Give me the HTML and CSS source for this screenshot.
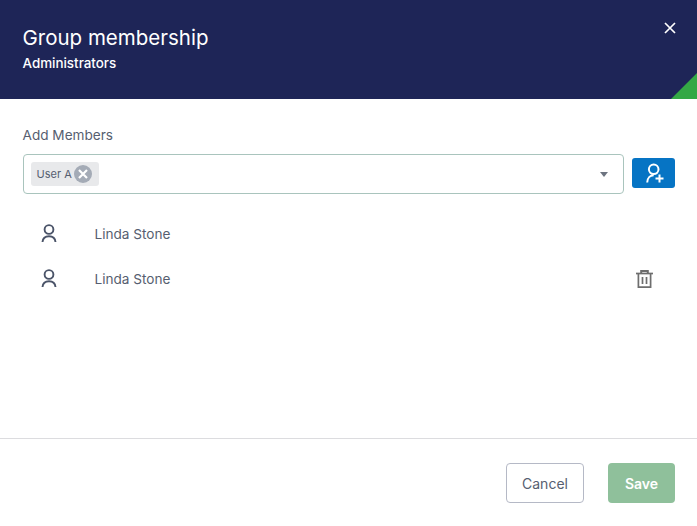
FILE: index.html
```html
<!DOCTYPE html>
<html lang="en">
<head>
    <meta charset="UTF-8">
    <meta name="viewport" content="width=device-width, initial-scale=1.0">
    <title>Group membership</title>
    <link rel="stylesheet" href="styles.css">
</head>
<body>
    <!-- Header -->
    <header class="modal-header">
        <h1>Group membership</h1>
        <p>Administrators</p>
        <svg class="close-icon" width="12" height="12" viewBox="0 0 12 12">
            <path d="M1 1L11 11M11 1L1 11" stroke="#fff" stroke-width="1.7" fill="none"/>
        </svg>
        <span class="corner"></span>
    </header>

    <!-- Add members -->
    <main class="modal-body">
        <label class="field-label">Add Members</label>
        <div class="add-row">
            <div class="select-box">
                <span class="tag">
                    User A
                    <span class="tag-remove">
                        <svg width="18" height="18" viewBox="0 0 18 18">
                            <path d="M5 5L13 13M13 5L5 13" stroke="#fff" stroke-width="2.2" fill="none"/>
                        </svg>
                    </span>
                </span>
                <span class="caret"></span>
            </div>
            <button class="add-btn">
                <svg width="20" height="20" viewBox="0 0 20 20" fill="none" stroke="#fff" stroke-width="2">
                    <circle cx="9.7" cy="6.3" r="4.8"/>
                    <path d="M3.2 19.5C3.4 15 6.2 12.3 9.7 12.3"/>
                    <path d="M11.5 15.5H19.5M15.5 11.5V19.5"/>
                </svg>
            </button>
        </div>

        <ul class="member-list">
            <li>
                <svg class="user-icon" width="16" height="20" viewBox="0 0 16 20" fill="none" stroke="#4a5368" stroke-width="1.9">
                    <circle cx="8" cy="5.5" r="4.4"/>
                    <path d="M1.5 18C1.8 14.5 4.2 12.2 8 12.2C11.8 12.2 14.2 14.5 14.5 18"/>
                </svg>
                <span class="member-name">Linda Stone</span>
            </li>
            <li>
                <svg class="user-icon" width="16" height="20" viewBox="0 0 16 20" fill="none" stroke="#4a5368" stroke-width="1.9">
                    <circle cx="8" cy="5.5" r="4.4"/>
                    <path d="M1.5 18C1.8 14.5 4.2 12.2 8 12.2C11.8 12.2 14.2 14.5 14.5 18"/>
                </svg>
                <span class="member-name">Linda Stone</span>
                <svg class="trash-icon" width="17" height="18" viewBox="0 0 17 18" fill="none" stroke="#6e6e6e" stroke-width="1.7">
                    <path d="M0 3.5H17"/>
                    <path d="M5.2 3V1H11.8V3" stroke-width="2"/>
                    <path d="M2.4 3.5V17.1H14.6V3.5"/>
                    <path d="M6.5 7V14M10.5 7V14"/>
                </svg>
            </li>
        </ul>
    </main>

    <!-- Footer -->
    <footer class="modal-footer">
        <button class="btn-cancel">Cancel</button>
        <button class="btn-save">Save</button>
    </footer>
</body>
</html>
```

FILE: styles.css
```css
* {
    box-sizing: border-box;
}

body {
    margin: 0;
    height: 526px;
    display: flex;
    flex-direction: column;
    font-family: Inter, sans-serif;
    background-color: #fff;
    color: #565e70;
    overflow: hidden;
}

/* Header */
.modal-header {
    position: relative;
    height: 99px;
    padding: 25px 23px 0 22.5px;
    background-color: #1e2557;
    color: #fff;
    overflow: hidden;
}

.modal-header h1 {
    margin: 0;
    font-size: 20.5px;
    font-weight: 400;
    line-height: 25px;
}

.modal-header p {
    margin: 4px 0 0;
    font-size: 13.4px;
    font-weight: 500;
    line-height: 18px;
}

.close-icon {
    position: absolute;
    top: 22px;
    right: 21px;
}

.corner {
    position: absolute;
    right: 0;
    bottom: 0;
    width: 0;
    height: 0;
    border-style: solid;
    border-width: 0 0 26px 26px;
    border-color: transparent transparent #34a845 transparent;
}

/* Body */
.modal-body {
    flex: 1;
    padding: 27px 22px 0 22.5px;
}

.field-label {
    display: block;
    font-size: 13.6px;
    line-height: 18px;
}

.add-row {
    display: flex;
    align-items: flex-start;
    gap: 8px;
    margin-top: 10px;
}

.select-box {
    flex: 1;
    display: flex;
    align-items: center;
    justify-content: space-between;
    height: 40px;
    padding: 0 15px 0 7px;
    border: 1px solid #a9c4bd;
    border-radius: 4px;
}

.tag {
    display: flex;
    align-items: center;
    gap: 2px;
    height: 24px;
    padding: 0 7px 0 6px;
    background-color: #e8e9eb;
    border-radius: 3px;
    font-size: 11px;
}

.tag-remove {
    display: flex;
    width: 18px;
    height: 18px;
    align-items: center;
    justify-content: center;
    background-color: #a4abb6;
    border-radius: 50%;
}

.caret {
    width: 0;
    height: 0;
    border-style: solid;
    border-width: 5px 4.5px 0 4.5px;
    border-color: #6d7480 transparent transparent transparent;
}

.add-btn {
    display: flex;
    align-items: center;
    justify-content: center;
    width: 43px;
    height: 30px;
    margin-top: 4px;
    padding: 0;
    border: none;
    border-radius: 3px;
    background-color: #0674c4;
}

/* Members */
.member-list {
    list-style: none;
    margin: 17px 0 0;
    padding: 0;
}

.member-list li {
    display: flex;
    align-items: center;
    height: 45px;
    padding: 0 22px 0 18.5px;
    font-size: 13.6px;
}

.member-name {
    flex: 1;
    margin-left: 37.5px;
}

/* Footer */
.modal-footer {
    display: flex;
    justify-content: flex-end;
    gap: 24px;
    height: 88px;
    padding: 24px 22px 0 0;
    border-top: 1px solid #dcdcdf;
}

.modal-footer button {
    height: 40px;
    border-radius: 4px;
    font-family: Inter, sans-serif;
    font-size: 14px;
}

.btn-cancel {
    width: 78px;
    background: #fff;
    border: 1px solid #b5b9c6;
    color: #565e70;
}

.btn-save {
    width: 67px;
    background-color: #8fc09b;
    border: none;
    color: #fff;
    font-weight: 600;
}
```
